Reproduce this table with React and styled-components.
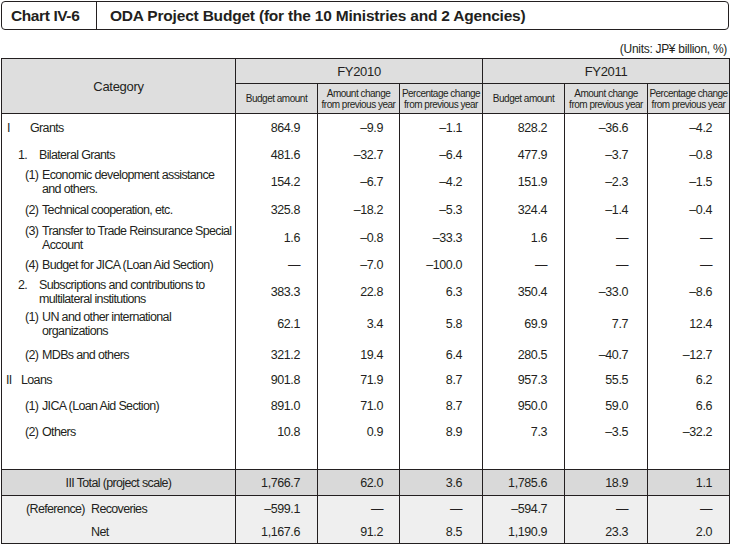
import React from 'react';
import styled, { createGlobalStyle } from 'styled-components';

const GlobalStyle = createGlobalStyle`
  html, body {
    margin: 0;
    padding: 0;
    background: #ffffff;
  }
  body {
    font-family: "Liberation Sans", Arial, sans-serif;
    color: #231f20;
  }
`;

const Page = styled.div`
  width: 730px;
  padding: 1px 1px 0 1px;
  box-sizing: border-box;
`;

const TitleBox = styled.div`
  display: flex;
  align-items: stretch;
  height: 29px;
  border: 1px solid #231f20;
  border-radius: 4px;
  box-sizing: border-box;
`;

const ChartNo = styled.div`
  width: 95px;
  border-right: 1px solid #231f20;
  display: flex;
  align-items: center;
  padding-left: 9px;
  box-sizing: border-box;
  font-size: 15.5px;
  font-weight: bold;
  letter-spacing: -0.4px;
`;

const ChartTitle = styled.div`
  display: flex;
  align-items: center;
  padding-left: 13px;
  font-size: 15.5px;
  font-weight: bold;
  letter-spacing: -0.2px;
`;

const Units = styled.div`
  text-align: right;
  font-size: 12px;
  letter-spacing: -0.3px;
  padding: 10px 2px 0 0;
  height: 18px;
  line-height: 18px;
`;

const Table = styled.table`
  border-collapse: collapse;
  table-layout: fixed;
  width: 728px;
  border: 1px solid #231f20;
`;

const Th = styled.th`
  background: #dedede;
  border: 1px solid #231f20;
  font-weight: normal;
  text-align: center;
  padding: 0;
  white-space: nowrap;
  font-size: ${p => p.$size || 10}px;
  letter-spacing: ${p => (p.$size ? -0.3 : -0.5)}px;
  line-height: ${p => p.$lh || 11}px;
  height: ${p => p.$h}px;
`;

const Tr = styled.tr`
  background: ${p => p.$bg || '#ffffff'};
  border-top: ${p => (p.$line ? '1px solid #231f20' : 'none')};
  td {
    height: ${p => p.$h}px;
  }
`;

const Cell = styled.td`
  border-left: 1px solid #231f20;
  border-right: 1px solid #231f20;
  padding: 0 ${p => p.$pr || 18}px 0 0;
  text-align: right;
  font-size: 12.5px;
  letter-spacing: -0.4px;
  vertical-align: middle;
  white-space: nowrap;
`;

const LabelCell = styled.td`
  border-left: 1px solid #231f20;
  border-right: 1px solid #231f20;
  padding: 0;
  font-size: 12.5px;
  letter-spacing: -0.65px;
  line-height: 14px;
  vertical-align: middle;
  white-space: nowrap;
  text-align: ${p => (p.$center ? 'center' : 'left')};
`;

const Label = styled.div`
  display: flex;
  align-items: flex-start;
  padding-left: ${p => p.$pad}px;
`;

const Marker = styled.span`
  flex: 0 0 ${p => p.$w}px;
`;

const rows = [
  { pad: 5, mark: 'I', w: 23, text: ['Grants'], h: 28, v: ['864.9', '–9.9', '–1.1', '828.2', '–36.6', '–4.2'] },
  { pad: 16, mark: '1.', w: 21, text: ['Bilateral Grants'], h: 25, v: ['481.6', '–32.7', '–6.4', '477.9', '–3.7', '–0.8'] },
  { pad: 23, mark: '(1)', w: 17, text: ['Economic development assistance', 'and others.'], h: 29, v: ['154.2', '–6.7', '–4.2', '151.9', '–2.3', '–1.5'] },
  { pad: 23, mark: '(2)', w: 17, text: ['Technical cooperation, etc.'], h: 27, v: ['325.8', '–18.2', '–5.3', '324.4', '–1.4', '–0.4'] },
  { pad: 23, mark: '(3)', w: 17, text: ['Transfer to Trade Reinsurance Special', 'Account'], h: 30, v: ['1.6', '–0.8', '–33.3', '1.6', '—', '—'] },
  { pad: 23, mark: '(4)', w: 17, text: ['Budget for JICA (Loan Aid Section)'], h: 24, v: ['—', '–7.0', '–100.0', '—', '—', '—'] },
  { pad: 16, mark: '2.', w: 21, text: ['Subscriptions and contributions to', 'multilateral institutions'], h: 29, v: ['383.3', '22.8', '6.3', '350.4', '–33.0', '–8.6'] },
  { pad: 23, mark: '(1)', w: 17, text: ['UN and other international', 'organizations'], h: 36, v: ['62.1', '3.4', '5.8', '69.9', '7.7', '12.4'] },
  { pad: 23, mark: '(2)', w: 17, text: ['MDBs and others'], h: 25, v: ['321.2', '19.4', '6.4', '280.5', '–40.7', '–12.7'] },
  { pad: 4, mark: 'II', w: 15, text: ['Loans'], h: 26, v: ['901.8', '71.9', '8.7', '957.3', '55.5', '6.2'] },
  { pad: 23, mark: '(1)', w: 17, text: ['JICA (Loan Aid Section)'], h: 26, v: ['891.0', '71.0', '8.7', '950.0', '59.0', '6.6'] },
  { pad: 23, mark: '(2)', w: 17, text: ['Others'], h: 26, v: ['10.8', '0.9', '8.9', '7.3', '–3.5', '–32.2'] },
];

const padRight = [17, 16, 20, 17, 19, 17];

function Values({ v }) {
  return v.map((x, i) => (
    <Cell key={i} $pr={padRight[i]}>{x}</Cell>
  ));
}

function Lines({ text }) {
  return text.map((t, i) => (
    <React.Fragment key={i}>
      {i > 0 && <br />}
      {t}
    </React.Fragment>
  ));
}

export default function App() {
  return (
    <Page>
      <GlobalStyle />
      <TitleBox>
        <ChartNo>Chart IV-6</ChartNo>
        <ChartTitle>ODA Project Budget (for the 10 Ministries and 2 Agencies)</ChartTitle>
      </TitleBox>
      <Units>(Units: JP¥ billion, %)</Units>
      <Table>
        <colgroup>
          <col style={{ width: 234 }} />
          <col style={{ width: 82 }} />
          <col style={{ width: 82 }} />
          <col style={{ width: 83 }} />
          <col style={{ width: 82 }} />
          <col style={{ width: 83 }} />
          <col style={{ width: 82 }} />
        </colgroup>
        <thead>
          <tr>
            <Th rowSpan={2} $size={13} $lh={15}>Category</Th>
            <Th colSpan={3} $size={13} $lh={15} $h={24}>FY2010</Th>
            <Th colSpan={3} $size={13} $lh={15} $h={24}>FY2011</Th>
          </tr>
          <tr>
            <Th $h={29}>Budget amount</Th>
            <Th $h={29}>Amount change<br />from previous year</Th>
            <Th $h={29}>Percentage change<br />from previous year</Th>
            <Th $h={29}>Budget amount</Th>
            <Th $h={29}>Amount change<br />from previous year</Th>
            <Th $h={29}>Percentage change<br />from previous year</Th>
          </tr>
        </thead>
        <tbody>
          {rows.map((r, i) => (
            <Tr key={i} $h={r.h}>
              <LabelCell>
                <Label $pad={r.pad}>
                  <Marker $w={r.w}>{r.mark}</Marker>
                  <span><Lines text={r.text} /></span>
                </Label>
              </LabelCell>
              <Values v={r.v} />
            </Tr>
          ))}
          <Tr $h={24}>
            <LabelCell />
            <Values v={['', '', '', '', '', '']} />
          </Tr>
          <Tr $h={25} $bg="#d9d9d9" $line>
            <LabelCell $center>III Total (project scale)</LabelCell>
            <Values v={['1,766.7', '62.0', '3.6', '1,785.6', '18.9', '1.1']} />
          </Tr>
          <Tr $h={25} $bg="#efefef" $line>
            <LabelCell>
              <Label $pad={24}>
                <Marker $w={65}>(Reference)</Marker>
                <span>Recoveries</span>
              </Label>
            </LabelCell>
            <Values v={['–599.1', '—', '—', '–594.7', '—', '—']} />
          </Tr>
          <Tr $h={22} $bg="#efefef">
            <LabelCell>
              <Label $pad={24}>
                <Marker $w={65} />
                <span>Net</span>
              </Label>
            </LabelCell>
            <Values v={['1,167.6', '91.2', '8.5', '1,190.9', '23.3', '2.0']} />
          </Tr>
        </tbody>
      </Table>
    </Page>
  );
}
